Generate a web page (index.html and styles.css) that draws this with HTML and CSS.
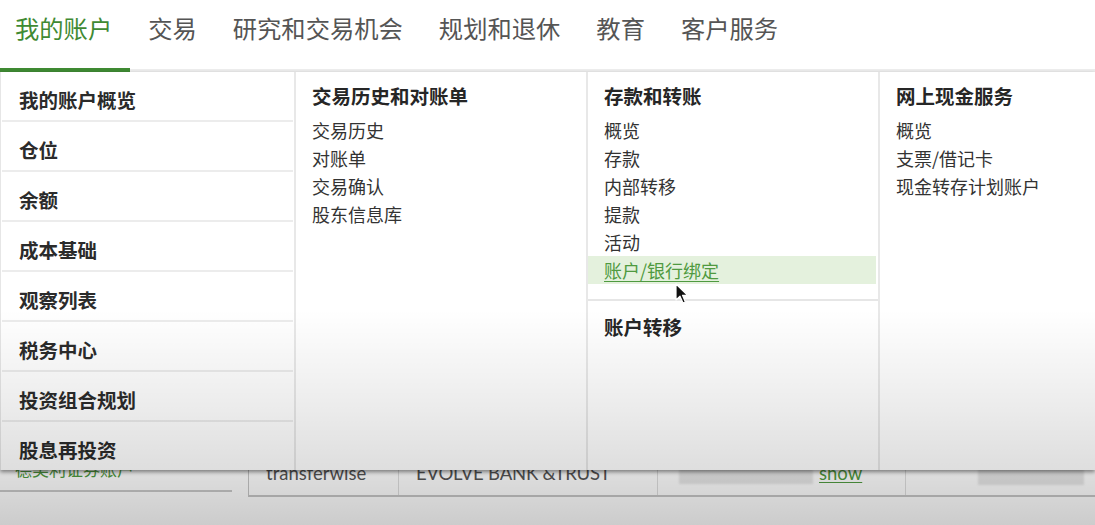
FILE: index.html
```html
<!DOCTYPE html>
<html lang="zh-CN">
<head>
<meta charset="utf-8">
<title>我的账户</title>
<link rel="stylesheet" href="styles.css">
</head>
<body>
<div class="page">
  <nav class="topnav">
    <a class="nav-item active">我的账户</a>
    <a class="nav-item">交易</a>
    <a class="nav-item">研究和交易机会</a>
    <a class="nav-item">规划和退休</a>
    <a class="nav-item">教育</a>
    <a class="nav-item">客户服务</a>
  </nav>

  <main class="content">
    <div class="acct-row">
      <div class="acct-name"><span class="acct-link">德美利证券账户</span></div>
      <div class="acct-table">
        <div class="cell c1">transferwise</div>
        <div class="cell c2">EVOLVE BANK &amp;TRUST</div>
        <div class="cell c3"><span class="blur b1"></span><a class="show">show</a></div>
        <div class="cell c4"><span class="blur b2"></span></div>
      </div>
    </div>

    <div class="mega">
      <ul class="side-list">
        <li class="side-item">我的账户概览</li>
        <li class="side-item">仓位</li>
        <li class="side-item">余额</li>
        <li class="side-item">成本基础</li>
        <li class="side-item">观察列表</li>
        <li class="side-item">税务中心</li>
        <li class="side-item">投资组合规划</li>
        <li class="side-item">股息再投资</li>
      </ul>

      <div class="col">
        <div class="col-head">交易历史和对账单</div>
        <a class="col-link">交易历史</a>
        <a class="col-link">对账单</a>
        <a class="col-link">交易确认</a>
        <a class="col-link">股东信息库</a>
      </div>

      <div class="col">
        <div class="col-head">存款和转账</div>
        <a class="col-link">概览</a>
        <a class="col-link">存款</a>
        <a class="col-link">内部转移</a>
        <a class="col-link">提款</a>
        <a class="col-link">活动</a>
        <a class="col-link hover">账户/银行绑定</a>
        <div class="col-sep"></div>
        <div class="col-head">账户转移</div>
      </div>

      <div class="col last">
        <div class="col-head">网上现金服务</div>
        <a class="col-link">概览</a>
        <a class="col-link">支票/借记卡</a>
        <a class="col-link">现金转存计划账户</a>
      </div>
    </div>
  </main>

  <svg class="cursor" width="14" height="22" viewBox="0 0 14 22">
    <path d="M1 1 L1 17 L5 13.2 L8 20 L10.4 19 L7.5 12.3 L12.6 12.3 Z" fill="#111" stroke="#fff" stroke-width="1.2" stroke-linejoin="round"/>
  </svg>
  <div class="vignette"></div>
</div>
</body>
</html>
```

FILE: styles.css
```css
* { box-sizing: border-box; }
html, body { margin: 0; padding: 0; }
body {
  background: #ffffff;
  font-family: "Noto Sans CJK SC", "Noto Sans", sans-serif;
  color: #333;
  width: 1095px;
  height: 525px;
  overflow: hidden;
}
.page {
  position: relative;
  width: 1095px;
  height: 525px;
  overflow: hidden;
  background: #fff;
}

/* top navigation */
.topnav {
  display: flex;
  align-items: stretch;
  height: 72px;
  border-bottom: 3px solid #ededed;
}
.nav-item {
  position: relative;
  display: flex;
  align-items: center;
  padding: 0 18px 12px;
  font-size: 24.3px;
  color: #555;
  text-decoration: none;
  line-height: 1;
}
.nav-item:first-child { padding-left: 15px; }
.nav-item.active { color: #3f8a33; }
.nav-item.active::after {
  content: "";
  position: absolute;
  left: 0;
  right: 0;
  bottom: -3px;
  height: 4px;
  background: #3f8a33;
}

/* page content behind the menu */
.content {
  position: relative;
  height: 453px;
}
.acct-row {
  display: flex;
  padding-top: 368px;
  height: 425px;
}
.acct-name {
  width: 232px;
  height: 52px;
  border-bottom: 2px solid #c9c9c9;
  padding-left: 15px;
  padding-top: 17px;
}
.acct-link {
  color: #4f9a40;
  font-size: 17px;
  line-height: 20px;
}
.acct-table {
  flex: 1;
  margin-left: 16px;
  display: flex;
  border-left: 1px solid #c6c6c6;
  border-bottom: 2px solid #c6c6c6;
  font-family: Lato, "Liberation Sans", sans-serif;
  font-size: 18.5px;
  color: #555;
}
.cell {
  display: flex;
  align-items: flex-end;
  padding-bottom: 12px;
  border-right: 1px solid #dedede;
  line-height: 20px;
}
.c1 { width: 150px; padding-left: 17px; }
.c2 { width: 259px; padding-left: 17px; letter-spacing: -0.2px; }
.c3 { width: 248px; padding-left: 21px; }
.c4 { flex: 1; padding-left: 72px; border-right: 0; padding-bottom: 10px; }
.blur {
  display: block;
  height: 23px;
  background: #e6e6e6;
  filter: blur(1px);
  align-self: flex-end;
  margin-bottom: -1px;
}
.b1 { width: 134px; margin-right: 6px; }
.b2 { width: 106px; margin-bottom: 0; height: 22px; }
.show {
  color: #4f9a40;
  text-decoration: underline;
  text-underline-offset: 2px;
}

/* mega menu overlay */
.mega {
  position: absolute;
  top: 0;
  left: 0;
  right: 0;
  height: 398px;
  display: grid;
  grid-template-columns: 295px 292px 292px 1fr;
  background: #fff;
  border-left: 1px solid #e6e6e6;
  box-shadow: 0 2px 4px rgba(0, 0, 0, 0.45);
}
.side-list {
  list-style: none;
  margin: 0;
  padding: 0;
  border-right: 2px solid #e8e8e8;
}
.side-item {
  height: 50px;
  margin: 0 1px;
  border-bottom: 2px solid #ececec;
  display: flex;
  align-items: center;
  padding: 6px 0 0 17px;
  font-size: 19.5px;
  font-weight: 700;
  color: #2b2b2b;
}
.side-item:last-child { border-bottom: 0; height: 48px; }

.col {
  display: flex;
  flex-direction: column;
  padding-top: 12px;
  border-right: 2px solid #e8e8e8;
}
.col.last { border-right: 0; }
.col-head {
  padding-left: 16px;
  font-size: 19.5px;
  font-weight: 700;
  line-height: 24px;
  color: #262626;
  margin-bottom: 8px;
}
.col-link {
  padding-left: 16px;
  margin-right: 2px;
  font-size: 18px;
  line-height: 28px;
  color: #333;
  text-decoration: none;
}
.col-link.hover {
  background: #e4f1dd;
  color: #4f9a40;
  text-decoration: underline;
  text-underline-offset: 3px;
}
.col-sep {
  margin-top: 15px;
  border-top: 2px solid #e6e6e6;
  margin-bottom: 14px;
}

.cursor {
  position: absolute;
  left: 675px;
  top: 283px;
}

.vignette {
  position: absolute;
  inset: 0;
  pointer-events: none;
  background: linear-gradient(to bottom,
    rgba(0, 0, 0, 0) 0px,
    rgba(0, 0, 0, 0) 310px,
    rgba(0, 0, 0, 0.07) 400px,
    rgba(0, 0, 0, 0.13) 470px,
    rgba(0, 0, 0, 0.2) 525px);
}
```
